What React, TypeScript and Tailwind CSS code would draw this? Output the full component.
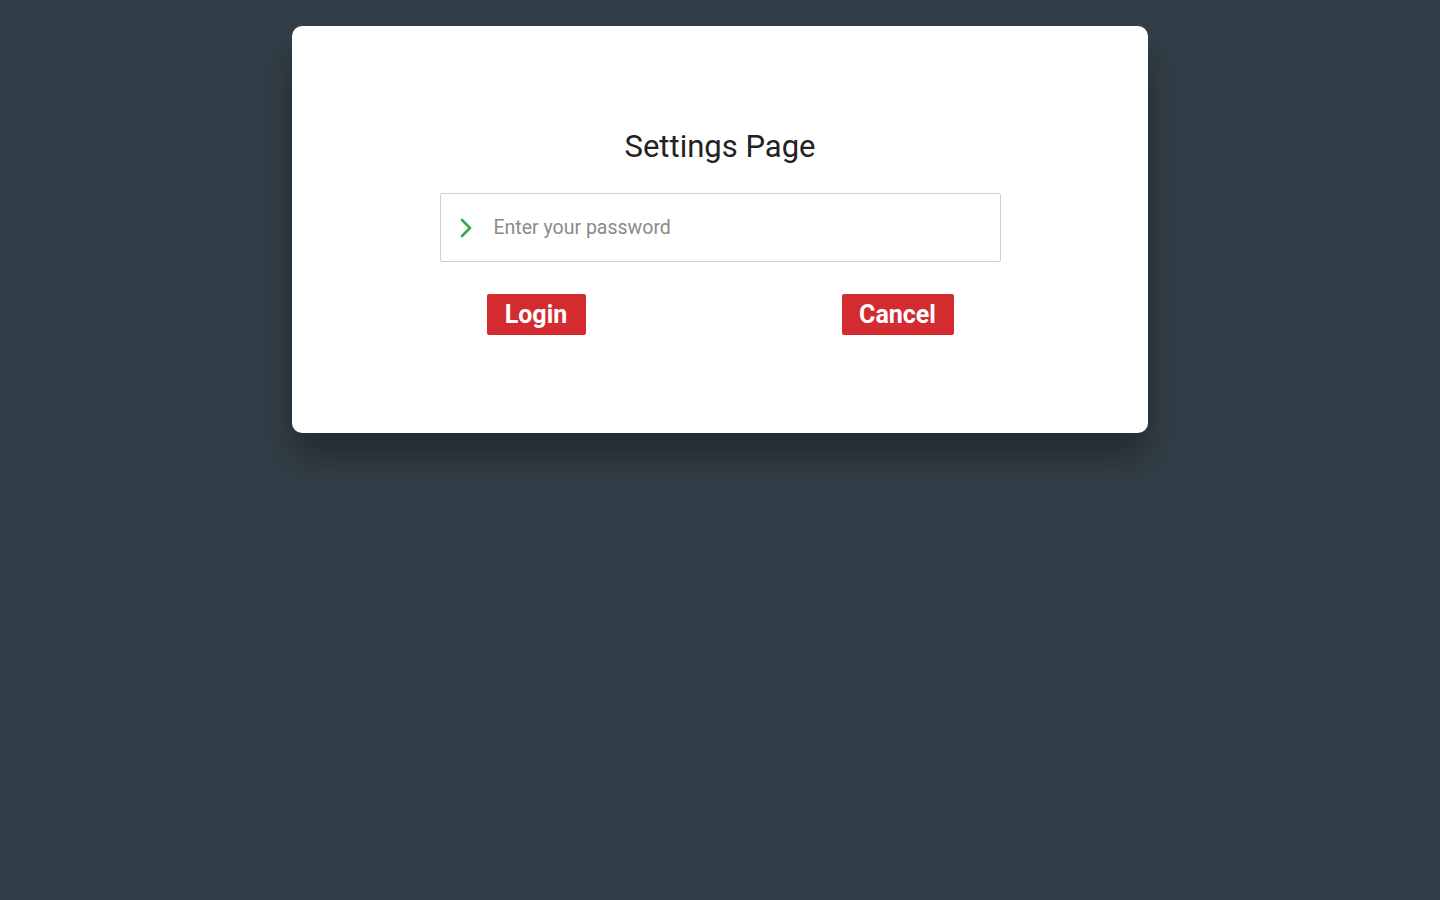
export default function App() {
    return (
        <div
            className="min-h-[900px] w-full flex justify-center bg-[#333f48]"
            style={{ fontFamily: 'Roboto, "Liberation Sans", sans-serif' }}
        >
            <div className="mt-[26px] w-[856px] h-[407px] bg-white rounded-[10px] flex flex-col items-center shadow-[0_24px_40px_rgba(0,0,0,0.35)]">
                <h1 className="mt-[101px] text-[31px] leading-[40px] text-[#222222] font-normal">
                    Settings Page
                </h1>

                <div className="mt-[26px] w-[561px] h-[69px] border border-[#cfcfcf] rounded-[2px] flex items-center pl-[17px]">
                    <svg width="16" height="22" viewBox="0 0 16 22" fill="none">
                        <path d="M4 3 L12 11 L4 19" stroke="#3fa34d" strokeWidth="2.6" strokeLinecap="round" strokeLinejoin="round" />
                    </svg>
                    <span className="ml-[20px] text-[19.5px] text-[#8a8a8a]">
                        Enter your password
                    </span>
                </div>

                <div className="mt-[32px] w-[561px] px-[47px] flex justify-between">
                    <button className="w-[99px] h-[41px] bg-[#d32b2f] rounded-[2px] text-white font-bold text-[25px] leading-none">
                        Login
                    </button>
                    <button className="w-[112px] h-[41px] bg-[#d32b2f] rounded-[2px] text-white font-bold text-[25px] leading-none">
                        Cancel
                    </button>
                </div>
            </div>
        </div>
    )
}
